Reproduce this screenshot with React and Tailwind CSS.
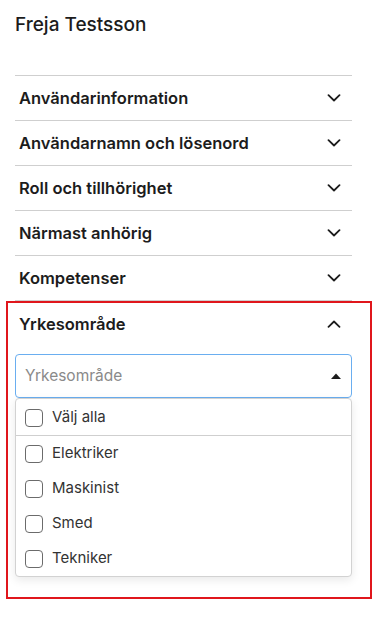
import { useState } from 'react'

const sections = [
  'Användarinformation',
  'Användarnamn och lösenord',
  'Roll och tillhörighet',
  'Närmast anhörig',
  'Kompetenser',
]

const options = ['Elektriker', 'Maskinist', 'Smed', 'Tekniker']

function Chevron({ up }) {
  return (
    <svg width="14" height="8" viewBox="0 0 14 8" fill="none" className={up ? 'rotate-180' : ''}>
      <path d="M1.5 1.2L7 6.5l5.5-5.3" stroke="#1c1c1c" strokeWidth="1.8" strokeLinecap="round" strokeLinejoin="round" />
    </svg>
  )
}

function Checkbox({ label, checked, onChange, tall }) {
  return (
    <label className={`flex items-center gap-[9px] px-[9px] cursor-pointer ${tall ? 'h-[36px] pt-px' : 'h-[35px]'}`}>
      <span
        className={`w-[18px] h-[18px] rounded-[4px] border border-[#6b6b6b] ${checked ? 'bg-[#2f6fd8] border-[#2f6fd8]' : 'bg-white'}`}
        onClick={onChange}
      />
      <span className="text-[15px] text-[#333]">{label}</span>
    </label>
  )
}

export default function App() {
  const [selected, setSelected] = useState({})
  const toggle = (k) => setSelected((s) => ({ ...s, [k]: !s[k] }))

  return (
    <div className="min-h-[617px] bg-white pl-[15px] pr-[24px] pt-[13px] text-[#1c1c1c]" style={{ fontFamily: 'Inter, "Noto Sans", sans-serif' }}>
      <h1 className="text-[19px] font-medium leading-[23px]">Freja Testsson</h1>

      <div className="mt-[39px] border-t border-[#cfcfcf]">
        {sections.map((s) => (
          <div key={s} className="flex items-center justify-between h-[45px] border-b border-[#cfcfcf] pl-[4px] pr-[11px]">
            <span className="text-[16.5px] font-semibold">{s}</span>
            <Chevron />
          </div>
        ))}
      </div>

      {/* Open section, highlighted */}
      <div className="-ml-[9px] -mr-[20px] border-2 border-[#e0161c] pl-[7px] pr-[18px] pb-[20px]">
        <div className="flex items-center justify-between h-[42px] pl-[4px] pr-[11px]">
          <span className="text-[16.5px] font-semibold">Yrkesområde</span>
          <Chevron up />
        </div>

        <div className="mt-[9px] flex items-center justify-between h-[44px] rounded-[4px] border border-[#6aaef0] pl-[9px] pr-[10px]">
          <span className="text-[15.5px] text-[#8a8a8a]">Yrkesområde</span>
          <svg width="10" height="6" viewBox="0 0 10 6">
            <path d="M0 6L5 0.5 10 6z" fill="#1c1c1c" />
          </svg>
        </div>

        <div className="rounded-[4px] border border-[#d2d2d2] bg-white shadow-[0_3px_10px_rgba(0,0,0,0.09)]">
          <div className="border-b border-[#cfcfcf]">
            <Checkbox tall label="Välj alla" checked={!!selected.all} onChange={() => toggle('all')} />
          </div>
          {options.map((o) => (
            <Checkbox key={o} label={o} checked={!!selected[o]} onChange={() => toggle(o)} />
          ))}
        </div>
      </div>
    </div>
  )
}
